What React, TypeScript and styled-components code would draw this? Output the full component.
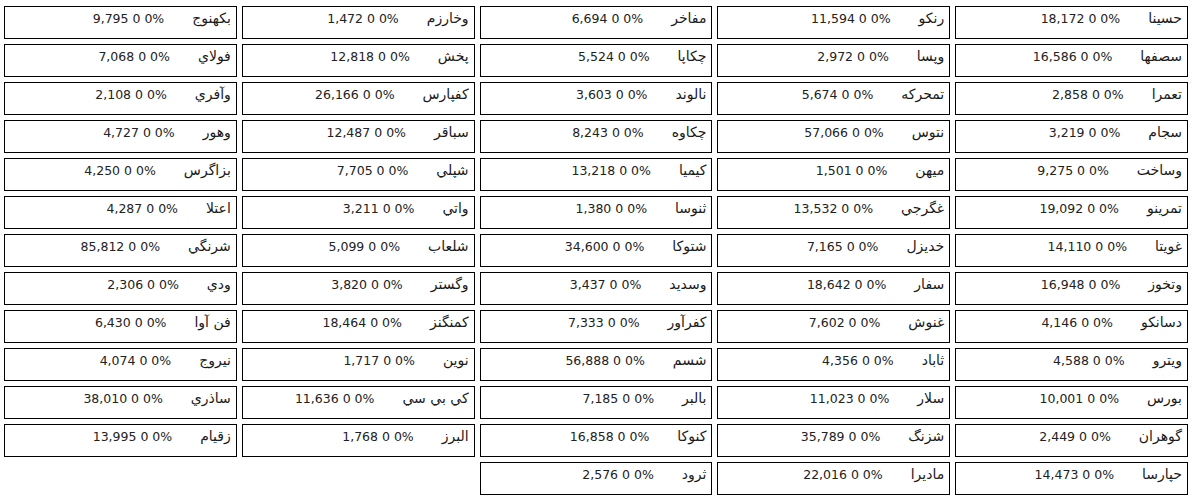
import styled, { createGlobalStyle } from 'styled-components'

type Quote = { name: string; price: string }

// ردیف‌ها به ترتیب خواندن از راست به چپ
const quotes: Quote[] = [
  { name: 'حسينا', price: '18,172' },
  { name: 'رنكو', price: '11,594' },
  { name: 'مفاخر', price: '6,694' },
  { name: 'وخارزم', price: '1,472' },
  { name: 'بكهنوج', price: '9,795' },

  { name: 'سصفها', price: '16,586' },
  { name: 'وپسا', price: '2,972' },
  { name: 'چكاپا', price: '5,524' },
  { name: 'پخش', price: '12,818' },
  { name: 'فولاي', price: '7,068' },

  { name: 'تعمرا', price: '2,858' },
  { name: 'تمحركه', price: '5,674' },
  { name: 'نالوند', price: '3,603' },
  { name: 'كفپارس', price: '26,166' },
  { name: 'وآفري', price: '2,108' },

  { name: 'سجام', price: '3,219' },
  { name: 'نتوس', price: '57,066' },
  { name: 'چكاوه', price: '8,243' },
  { name: 'سباقر', price: '12,487' },
  { name: 'وهور', price: '4,727' },

  { name: 'وساخت', price: '9,275' },
  { name: 'ميهن', price: '1,501' },
  { name: 'كيميا', price: '13,218' },
  { name: 'شپلي', price: '7,705' },
  { name: 'بزاگرس', price: '4,250' },

  { name: 'تمرينو', price: '19,092' },
  { name: 'غگرجي', price: '13,532' },
  { name: 'ثنوسا', price: '1,380' },
  { name: 'واتي', price: '3,211' },
  { name: 'اعتلا', price: '4,287' },

  { name: 'غويتا', price: '14,110' },
  { name: 'خديزل', price: '7,165' },
  { name: 'شتوكا', price: '34,600' },
  { name: 'شلعاب', price: '5,099' },
  { name: 'شرنگي', price: '85,812' },

  { name: 'وتخوز', price: '16,948' },
  { name: 'سفار', price: '18,642' },
  { name: 'وسديد', price: '3,437' },
  { name: 'وگستر', price: '3,820' },
  { name: 'ودي', price: '2,306' },

  { name: 'دسانكو', price: '4,146' },
  { name: 'غنوش', price: '7,602' },
  { name: 'كفرآور', price: '7,333' },
  { name: 'كمنگنز', price: '18,464' },
  { name: 'فن آوا', price: '6,430' },

  { name: 'ويترو', price: '4,588' },
  { name: 'ثاباد', price: '4,356' },
  { name: 'شسم', price: '56,888' },
  { name: 'نوين', price: '1,717' },
  { name: 'نيروج', price: '4,074' },

  { name: 'بورس', price: '10,001' },
  { name: 'سلار', price: '11,023' },
  { name: 'بالبر', price: '7,185' },
  { name: 'كي بي سي', price: '11,636' },
  { name: 'ساذري', price: '38,010' },

  { name: 'گوهران', price: '2,449' },
  { name: 'شزنگ', price: '35,789' },
  { name: 'كنوكا', price: '16,858' },
  { name: 'البرز', price: '1,768' },
  { name: 'زقيام', price: '13,995' },

  { name: 'حپارسا', price: '14,473' },
  { name: 'مادیرا', price: '22,016' },
  { name: 'ثرود', price: '2,576' },
]

const GlobalStyle = createGlobalStyle`
  html, body {
    margin: 0;
    padding: 0;
    background: #fff;
  }
  body {
    font-family: "DejaVu Sans", Tahoma, sans-serif;
  }
`

export default function App() {
  return (
    <>
      <GlobalStyle />
      <Board dir="rtl">
        {quotes.map((q) => (
          <Cell key={q.name}>
            <Name>{q.name}</Name>
            <Value dir="ltr">
              {q.price} 0 0%
            </Value>
          </Cell>
        ))}
      </Board>
    </>
  )
}

const Board = styled.div`
  display: grid;
  grid-template-columns: repeat(5, 1fr);
  grid-auto-rows: 33px;
  column-gap: 5px;
  row-gap: 5px;
  padding: 6px 4px 0 4px;
  box-sizing: border-box;
  width: 1192px;
`

const Cell = styled.div`
  display: flex;
  align-items: baseline;
  gap: 28px;
  border: 1px solid #000;
  box-sizing: border-box;
  padding: 3px 5px 0 5px;
  font-size: 12.5px;
  color: #222;
  overflow: hidden;
  white-space: nowrap;
`

const Name = styled.span`
  font-size: 14px;
  color: #1a1a1a;
`

const Value = styled.span`
  unicode-bidi: isolate;
  color: #222;
`
